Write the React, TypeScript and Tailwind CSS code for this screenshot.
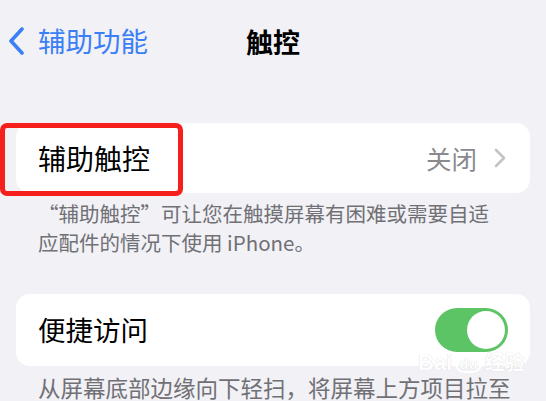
import React from 'react';

const font = { fontFamily: '"Noto Sans CJK SC", "Noto Sans", sans-serif' };

const Chevron = () => (
  <svg width="20" height="28" viewBox="0 0 20 28" className="shrink-0">
    <path d="M15 2 L4 14 L15 26" fill="none" stroke="#3a7ff5" strokeWidth="3.6" strokeLinecap="round" strokeLinejoin="round" />
  </svg>
);

const Toggle = () => (
  <div className="w-[73px] h-[44px] rounded-full bg-[#5dc466] p-[3px] flex justify-end">
    <div className="w-[38px] h-[38px] rounded-full bg-white" />
  </div>
);

export default function App() {
  return (
    <div className="w-[546px] h-[401px] overflow-hidden bg-[#f1f1f6] relative" style={font}>
      <div className="flex items-center h-[34px] mt-[24px] pl-[7px]">
        <Chevron />
        <span className="ml-[11px] text-[27.5px] leading-none text-[#3a7ff5]">辅助功能</span>
        <span className="ml-[98px] text-[27px] leading-none font-bold text-black">触控</span>
      </div>

      <div className="mt-[65px] mx-[16px] h-[70px] rounded-[14px] bg-white flex items-center pl-[22px] pr-[24px]">
        <span className="text-[28px] text-black">辅助触控</span>
        <span className="ml-auto text-[25.5px] text-[#8a8a8e]">关闭</span>
        <svg width="12" height="20" viewBox="0 0 12 20" className="ml-[17px]">
          <path d="M2 2 L10 10 L2 18" fill="none" stroke="#c4c4c7" strokeWidth="2.6" strokeLinecap="round" strokeLinejoin="round" />
        </svg>
      </div>

      <div className="px-[38px] pt-[6px] text-[20.5px] leading-[29px] text-[#707075]">
        <p>“辅助触控”可让您在触摸屏幕有困难或需要自适</p>
        <p>应配件的情况下使用 iPhone。</p>
      </div>

      <div className="mt-[37px] mx-[16px] h-[72px] rounded-[14px] bg-white flex items-center pl-[22px] pr-[22px]">
        <span className="text-[27.5px] text-black">便捷访问</span>
        <div className="ml-auto">
          <Toggle />
        </div>
      </div>

      <div className="px-[38px] pt-[7px] text-[22.5px] leading-[29px] text-[#707075] whitespace-nowrap">
        从屏幕底部边缘向下轻扫，将屏幕上方项目拉至
      </div>

      <div className="absolute left-0 top-[123px] w-[183px] h-[73px] border-[5px] border-[#f5201c] rounded-[7px]" />

      <div
        className="absolute left-[418px] top-[352px] flex items-center gap-[3px] text-[22px] leading-none font-bold text-white pointer-events-none"
        style={{ fontFamily: '"Liberation Sans", "Noto Sans CJK SC", sans-serif', textShadow: '0 0 1px #c8c8cc' }}
      >
        <span>Bai</span>
        <span className="text-[15px] rounded-full border-2 border-white px-[2px]">du</span>
        <span className="text-[20px]">经验</span>
      </div>
    </div>
  );
}
